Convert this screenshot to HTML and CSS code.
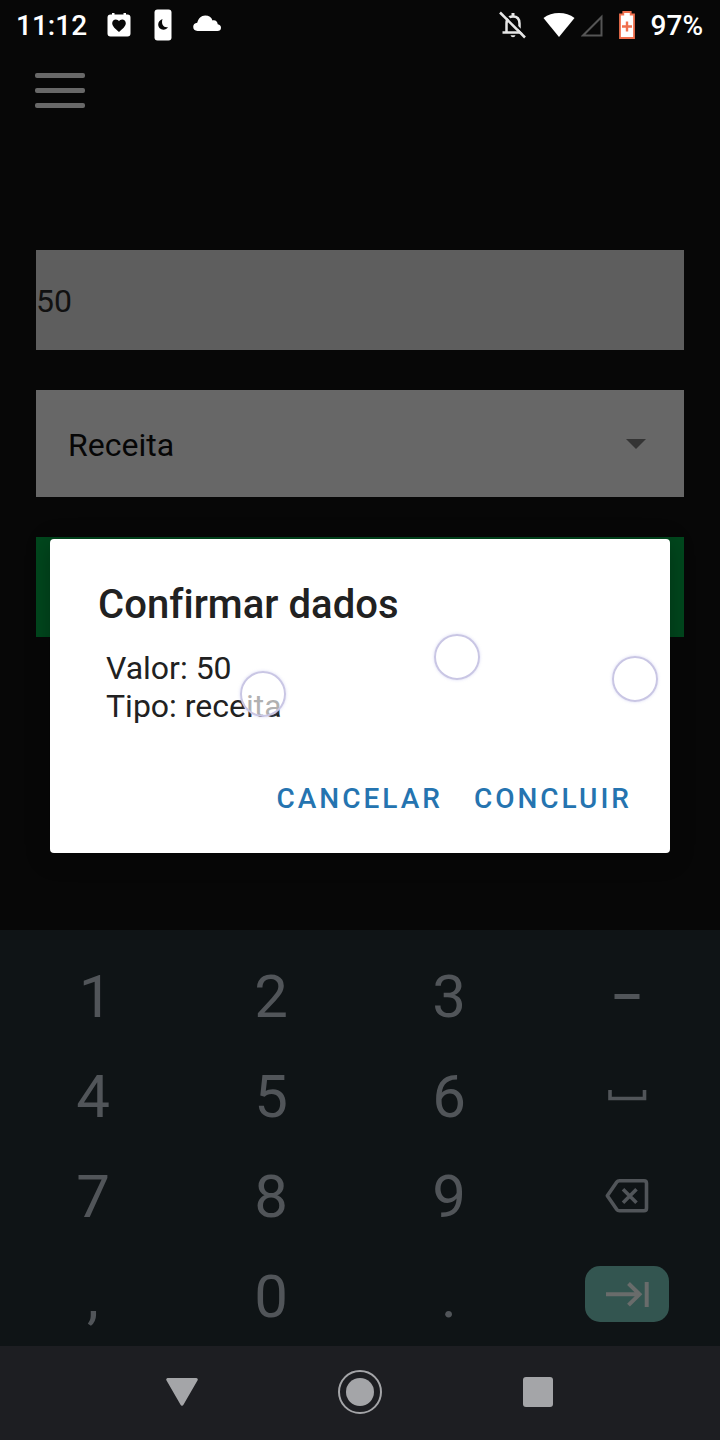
FILE: index.html
```html
<!DOCTYPE html>
<html lang="pt-BR">
<head>
<meta charset="utf-8">
<title>Confirmar dados</title>
<link rel="stylesheet" href="styles.css">
</head>
<body>
<div class="screen">
  <header class="status">
    <div class="status-left">
      <span class="clock">11:12</span>
      <svg class="ic-calendar" width="24" height="24" viewBox="0 0 24 24"><path fill="#fff" d="M3.500 1.500H5V0h2.500V1.500h9V0H19V1.500h1.500Q23.500 1.500 23.500 4.500v16q0 3-3 3h-17q-3 0-3-3v-16q0-3 3-3z"/><path fill="#080808" d="M12 19C8 15.500 5.200 13.200 5.200 10.300 5.200 8 6.900 6.500 8.800 6.500 10.200 6.500 11.400 7.300 12 8.300 12.600 7.300 13.800 6.500 15.200 6.500 17.100 6.500 18.800 8 18.800 10.300 18.800 13.200 16 15.500 12 19z"/></svg>
      <svg class="ic-phone" width="18" height="32" viewBox="0 0 18 32"><rect x=".5" y=".5" width="17" height="31" rx="3" fill="#fff"/><path fill="#080808" d="M8.500 10C5.800 11 4.200 13 4.200 15.500 4.200 18.500 6.600 20.700 9.400 20.700 11.400 20.700 13 19.700 14 18 10.500 19.200 6.700 16 8.500 10z"/></svg>
      <svg class="ic-cloud" width="28" height="17" viewBox="0 0 28 17"><path fill="#fff" d="M4.500 16Q.2 15.700.2 11.800.3 8.300 4.200 7.800C5.500 3.500 8 .6 12.200.6 16 .6 18.500 2.500 19.500 5.500 22.800 4.800 24.600 7 24.700 9.300 27 9.700 28 11 28 12.800 28 15 26.500 16 24.500 16z"/></svg>
    </div>
    <div class="status-right">
      <svg class="ic-bell" width="28" height="28" viewBox="0 0 28 28" fill="none" stroke="#e6e6e6" stroke-width="2.500"><path d="M7.500 21.500V12.500Q7.500 5.500 14 5.500T20.500 12.500V21.500M3.500 21.500H24"/><path d="M14 2V6" stroke-width="3"/><path d="M11.500 24.300h5q-.5 2-2.500 2t-2.500-2z" fill="#e6e6e6" stroke="none"/><path d="M3 .5 28 25.200" stroke="#080808" stroke-width="2"/><path d="M1 1.500 26 26.500"/></svg>
      <svg class="ic-wifi" width="32" height="24" viewBox="0 0 32 24"><path fill="#fff" d="M.5 5Q7 0 16 0T31.500 5L16 24z"/></svg>
      <svg class="ic-signal" width="22" height="23" viewBox="0 0 22 23"><path fill="none" stroke="#555" stroke-width="2" d="M2 21.500H20.500V3z"/></svg>
      <svg class="ic-battery" width="16" height="28" viewBox="0 0 16 28"><path fill="#fff" stroke="#f0704e" stroke-width="1.800" d="M4.300 1H11.700V3.500H15V27H1V3.500H4.300z"/><path stroke="#f0704e" stroke-width="2.400" d="M8 10.500V20.500M3 15.500H13"/></svg>
      <span class="percent">97%</span>
    </div>
  </header>

  <main class="app">
    <div class="menu"><i></i><i></i><i></i></div>
    <div class="field amount">50</div>
    <div class="field select"><span>Receita</span><svg width="20" height="10" viewBox="0 0 20 10"><path fill="#343434" d="M0 0H20L10 10z"/></svg></div>
    <div class="submit"></div>
  </main>

  <section class="keyboard">
    <span class="key key-one">1</span><span class="key">2</span><span class="key">3</span>
    <span class="key"><svg width="26" height="6" viewBox="0 0 26 6"><path fill="#515559" d="M.5 0H25.500V5H.5z"/></svg></span>
    <span class="key">4</span><span class="key">5</span><span class="key">6</span>
    <span class="key key-space"><svg width="40" height="12" viewBox="0 0 40 12"><path fill="none" stroke="#515559" stroke-width="3.600" d="M3 1V9.500H37.500V1"/></svg></span>
    <span class="key">7</span><span class="key">8</span><span class="key">9</span>
    <span class="key"><svg width="44" height="36" viewBox="0 0 44 36" fill="none" stroke="#515559" stroke-width="3.600" stroke-linejoin="round"><path d="M14.500 2.700H39Q41.500 2.700 41.500 5.200V30.300Q41.500 32.800 39 32.800H14.500Q12.700 32.800 11.800 31.500L2.300 17.800 11.800 4Q12.700 2.700 14.500 2.700z"/><path d="M18 11.200 31.500 24.700M31.500 11.200 18 24.700"/></svg></span>
    <span class="key">,</span><span class="key">0</span><span class="key">.</span>
    <span class="key"><span class="next"><svg width="44" height="28" viewBox="0 0 44 28" fill="none" stroke="#696c6b" stroke-width="4"><path d="M1 14.300H35M23.500 3.500 34.500 14.300 23.500 25.200M41.700 2V27"/></svg></span></span>
  </section>

  <nav class="navbar">
    <svg width="34" height="30" viewBox="0 0 34 30"><path fill="#a4a5a8" stroke="#a4a5a8" stroke-width="3" stroke-linejoin="round" d="M2.700 2.500H31.300L17 27.300z"/></svg>
    <svg width="44" height="44" viewBox="0 0 44 44"><circle cx="22" cy="22" r="21" fill="none" stroke="#a4a5a8" stroke-width="2"/><circle cx="22" cy="22" r="14" fill="#a4a5a8"/></svg>
    <svg width="34" height="30" viewBox="0 0 34 30"><rect x="2" width="30" height="30" rx="3" fill="#a4a5a8"/></svg>
  </nav>

  <div class="dialog">
    <h1 class="title">Confirmar dados</h1>
    <p class="message">Valor: 50<br>Tipo: receita</p>
    <div class="actions"><span>CANCELAR</span><span>CONCLUIR</span></div>
    <i class="ring ring-a"></i><i class="ring ring-b"></i><i class="ring ring-c"></i>
  </div>
</div>
</body>
</html>
```
FILE: styles.css
```css
* { box-sizing: border-box; }
body { margin: 0; background: #080808; font-family: Roboto, "Liberation Sans", sans-serif; }
svg { display: block; flex: none; }
.screen { position: relative; display: flex; flex-direction: column; width: 720px; height: 1440px; overflow: hidden; background: #070707; }

.status { display: flex; justify-content: space-between; height: 50px; padding: 1px 17px 0 16px; color: #fff; font-size: 28px; font-weight: 500; line-height: 50px; }
.status-left, .status-right { display: flex; align-items: center; height: 50px; }
.status svg { margin-top: -2px; }
.status-left .ic-calendar { margin-left: 20px; margin-top: -3px; }
.ic-phone { margin-left: 23px; }
.status-left .ic-cloud { margin-left: 21px; margin-top: -6px; }
.ic-bell { margin-right: 16px; }
.ic-wifi { margin-right: 6px; }
.status-right .ic-signal { margin-right: 16px; margin-top: -2px; }
.status-right .ic-battery { margin-right: 16px; margin-top: -3px; }

.app { display: flex; flex-direction: column; height: 880px; padding: 23px 36px 0; }
.menu { display: flex; flex-direction: column; gap: 10px; width: 50px; margin-left: -1px; }
.menu i { height: 5px; border-radius: 2px; background: #686868; }
.field { display: flex; align-items: center; font-size: 32px; }
.amount { height: 100px; margin-top: 142px; padding-top: 1px; background: #5e5e5e; color: #111; }
.select { justify-content: space-between; height: 107px; margin-top: 40px; padding: 3px 38px 0 32px; background: #676767; color: #060606; }
.select svg { margin-top: -3px; }
.submit { height: 100px; margin-top: 40px; background: #00471d; }

.keyboard { display: grid; grid-template-columns: repeat(4, 1fr); grid-template-rows: repeat(4, 1fr); height: 416px; padding: 17px 4px 0; background: #0f1416; color: #515559; font-size: 60px; }
.key { display: flex; align-items: center; justify-content: center; }
.key-one { padding-left: 5px; }
.key-space { padding-bottom: 4px; }
.next { display: flex; align-items: center; justify-content: center; width: 84px; height: 56px; margin-top: -4px; border-radius: 15px; background: #335550; }

.navbar { display: flex; align-items: center; justify-content: space-between; height: 94px; padding: 0 165px 2px; background: #1d1e22; }

.dialog { position: absolute; left: 50px; top: 539px; width: 620px; height: 314px; padding: 42px 38px 0 48px; border-radius: 4px; background: #fff; color: #212121; box-shadow: 0 4px 24px rgba(0, 0, 0, .3); }
.title { margin: 0; font-size: 40px; font-weight: 500; line-height: 48px; letter-spacing: .05px; }
.message { margin: 20px 0 0 8px; font-size: 32px; line-height: 38px; }
.actions { display: flex; justify-content: flex-end; gap: 31px; margin-top: 58px; color: #2574b0; font-size: 28px; font-weight: 500; line-height: 32px; letter-spacing: 3px; }
.ring { position: absolute; width: 46px; height: 46px; border: 2px solid #c9c6e4; border-radius: 50%; background: rgba(255, 255, 255, .65); box-shadow: 0 0 3px rgba(180, 180, 235, .5); }
.ring-a { left: 190px; top: 132px; }
.ring-b { left: 384px; top: 95px; }
.ring-c { left: 562px; top: 117px; }
```
